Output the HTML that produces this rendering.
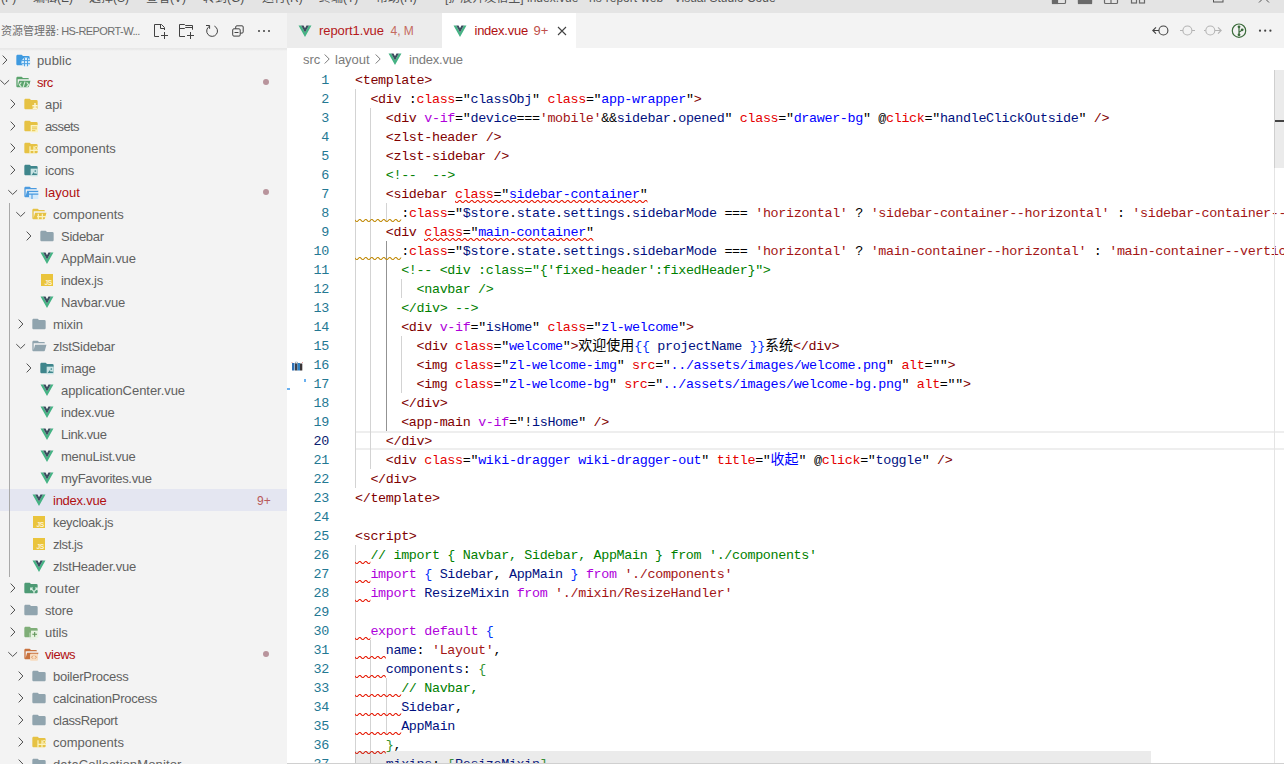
<!DOCTYPE html>
<html lang="zh-CN">
<head>
<meta charset="utf-8">
<title>index.vue - hs-report-web - Visual Studio Code</title>
<style>
*{box-sizing:border-box;margin:0;padding:0}
html,body{width:1284px;height:764px;overflow:hidden;background:#fff}
body{position:relative;font-family:"Liberation Sans","Noto Sans CJK SC",sans-serif;font-size:13px;color:#616161}
.abs{position:absolute}
/* title bar */
#titlebar{position:absolute;left:0;top:-17px;width:1284px;height:30px;background:#e4e4e4;color:#4f4f4f;font-size:12px;line-height:30px;white-space:nowrap;overflow:hidden}
#titlebar .mi{position:absolute;top:0}
#titlebar .wc{position:absolute}
/* sidebar */
#sidebar{position:absolute;left:0;top:13px;width:287px;height:751px;background:#f3f3f3;overflow:hidden}
#sbtitle{position:absolute;left:1px;top:0;height:35px;line-height:36px;font-size:11px;color:#6f6f6f;white-space:nowrap}
#sbtitle b{font-weight:normal;letter-spacing:-0.560px;margin-left:-1px}
.row{position:absolute;left:0;width:287px;height:22px;line-height:24px;white-space:nowrap}
.row.sel{background:#e4e6f1}
.row span{position:absolute;top:0}
.lbl{color:#616161;font-size:13px}
.lbl.err{color:#b01011}
.twb{width:16px;height:22px}
.tw{position:absolute;top:3px;left:0}
.icb{width:16px;height:22px}
.ic{position:absolute;top:3px;left:0;display:block}
.dot{left:263px;top:8px !important;width:6px;height:6px;border-radius:50%;background:#b8949c}
.badge{left:257px;color:#b8595a;font-size:12px}
#tguide{position:absolute;left:9px;top:203px;width:1px;height:374px;background:#a9a9a9}
/* tabs */
#tabs{position:absolute;left:287px;top:13px;width:997px;height:35px;background:#f3f3f3}
.tab{position:absolute;top:0;height:35px;line-height:36px;font-size:13px;white-space:nowrap}
.tab span{position:absolute;top:0}
#bc{position:absolute;left:287px;top:48px;width:997px;height:22px;line-height:24px;color:#7b7b7b;font-size:13px;white-space:nowrap;background:#fff}
#bc span{position:absolute;top:0}
.vi{width:16px;height:16px}.vi .ic{top:0}
/* editor */
#ed{position:absolute;left:0;top:0;width:1284px;height:764px;pointer-events:none}
.ln{position:absolute;left:287px;width:42px;height:19px;line-height:21px;text-align:right;color:#237893;font-family:"Liberation Mono",monospace;font-size:13.4px;letter-spacing:-0.341px}
.ln.cur{color:#0b216f}
.cl{position:absolute;left:355px;height:19px;line-height:21px;white-space:pre;color:#000;font-family:"Liberation Mono","Noto Sans CJK SC",monospace;font-size:13.4px;letter-spacing:-0.341px}
.cj{font-family:"Noto Sans CJK SC",sans-serif;font-size:14px;letter-spacing:0;line-height:0}
.t{color:#800000}.a{color:#e50000}.s{color:#0000ff}.k{color:#af00db}.v{color:#001080}.r{color:#a31515}.c{color:#008000}
.b1{color:#0431fa}.b2{color:#319331}.b3{color:#7b3814}
.ig{position:absolute;width:1px;background:#d3d3d3}
.ig.act{background:#939393}
.sq{position:absolute;overflow:visible}
#curline{position:absolute;left:355px;top:431px;width:929px;height:19px;border-top:2px solid #eee;border-bottom:2px solid #eee}
#vsb{position:absolute;left:1274px;top:70px;width:10px;height:694px;border-left:1px solid #e4e4e4}
#vsl{position:absolute;left:1274px;top:70px;width:10px;height:98px;background:#ebebeb;border-left:1px solid #cfcfcf}
#vmark{position:absolute;left:1275px;top:120px;width:9px;height:2px;background:#444}
#hsl{position:absolute;left:355px;top:751px;width:796px;height:13px;background:rgba(100,100,100,.13)}
#botline{position:absolute;left:287px;top:763px;width:997px;height:1px;background:#d0d0d0}
</style>
</head>
<body>
<div id="titlebar">
<span class="mi" style="left:-23px">文件(F)</span>
<span class="mi" style="left:33px">编辑(E)</span>
<span class="mi" style="left:89px">选择(S)</span>
<span class="mi" style="left:146px">查看(V)</span>
<span class="mi" style="left:203px">转到(G)</span>
<span class="mi" style="left:262px">运行(R)</span>
<span class="mi" style="left:319px">终端(T)</span>
<span class="mi" style="left:376px">帮助(H)</span>
<span class="mi" style="left:445px;color:#555">[扩展开发宿主] index.vue - hs-report-web - Visual Studio Code</span>
<svg class="wc" style="left:1050px;top:7px" width="100" height="16" viewBox="0 0 100 16"><g fill="none" stroke="#6a6a6a" stroke-width="1.200">
<rect x="2.500" y="2.500" width="13" height="11" rx="1"/><rect x="2.500" y="2.500" width="5" height="11" fill="#6a6a6a"/>
<rect x="28.500" y="2.500" width="13" height="11" rx="1"/><rect x="28.500" y="8.500" width="13" height="5" fill="#6a6a6a"/>
<rect x="54.500" y="2.500" width="13" height="11" rx="1"/><path d="M61 2.500v11"/>
<rect x="81.500" y="2.500" width="5" height="4"/><rect x="89.500" y="2.500" width="5" height="4"/><rect x="81.500" y="8.500" width="5" height="4.500"/><rect x="89.500" y="8.500" width="5" height="4.500"/>
</g></svg>
<svg class="wc" style="left:1208px;top:8px" width="70" height="14" viewBox="0 0 70 14"><g fill="none" stroke="#555" stroke-width="1">
<rect x="5.500" y="1.500" width="9.500" height="9.500"/><path d="M51 1.500l10 10M61 1.500l-10 10"/></g></svg>
</div>

<div id="sidebar">
<div id="sbtitle">资源管理器: <b>HS-REPORT-W...</b></div>
<svg class="abs" style="left:150px;top:8px" width="130" height="20" viewBox="0 0 130 20"><g fill="none" stroke="#424242" stroke-width="1">
<!-- new file -->
<path d="M9 15.500H4.500V3.500h7l3 3v2.500M10.500 3.500v4h4M14.500 11v7M11 14.500h7"/>
<!-- new folder -->
<path d="M35 15.500H29.500V3.500H34.500l1 1H42.500V8.700M29.500 7.500H34.500l1-1H42.500M40.500 11v7M37 14.500h7"/>
<!-- refresh -->
<path d="M59.600 5.200A5.400 5.400 0 1 0 64.400 5.100M56 4.500H59.600V7.800"/>
<!-- collapse all -->
<rect x="82.700" y="7.800" width="7.500" height="7.300" rx="1.200"/><path d="M85.700 7.800V6a1.200 1.200 0 0 1 1.200-1.200h5.100a1.200 1.200 0 0 1 1.200 1.200v4.900a1.200 1.200 0 0 1-1.200 1.200H90.200M84.500 11.500h4"/>
</g><g fill="#424242"><circle cx="109" cy="10" r="1"/><circle cx="114" cy="10" r="1"/><circle cx="119" cy="10" r="1"/></g></svg>
<div style="position:absolute;left:0;top:35px;width:287px;height:716px;overflow:hidden">
<div style="position:relative;top:-48px">
<div class="row" style="top:49px"><span class="twb" style="left:-3.4px"><svg class="tw" width="16" height="16" viewBox="0 0 16 16"><path d="M5.700 3.600L9.900 8l-4.200 4.400" fill="none" stroke="#505050" stroke-width="1"/></svg></span><span class="icb" style="left:15px"><svg class="ic" width="16" height="16" viewBox="0 0 24 24"><path d="M10 4H4c-1.11 0-2 .89-2 2v12c0 1.097.903 2 2 2h16c1.097 0 2-.903 2-2V8a2 2 0 0 0-2-2h-8l-2-2z" fill="#3f9ae0"/><circle cx="16.500" cy="15.200" r="6.800" fill="#d9eefc"/><path d="M10.500 12.900h12M10.500 17.500h12M14.200 9v12.400M18.800 9v12.400" stroke="#4b9fe2" stroke-width="1.500" fill="none"/></svg></span><span class="lbl" style="left:37px;letter-spacing:0.089px">public</span></div>
<div class="row" style="top:71px"><span class="twb" style="left:-3.4px"><svg class="tw" width="16" height="16" viewBox="0 0 16 16"><path d="M3.300 6.200L7.700 10.400l4.400-4.200" fill="none" stroke="#505050" stroke-width="1"/></svg></span><span class="icb" style="left:15px"><svg class="ic" width="16" height="16" viewBox="0 0 24 24"><path d="M19 20H4c-1.11 0-2-.9-2-2V6c0-1.11.89-2 2-2h6l2 2h7a2 2 0 0 1 2 2H4v10l2.14-8h17.07l-2.28 8.5c-.23.87-1.01 1.5-1.93 1.5z" fill="#5aa36c"/><path d="M9.500 12.500l-3 3.500 3 3.500M17.500 12.500l3 3.500-3 3.500M15 11.500l-3 9" stroke="#d7ecd9" stroke-width="1.800" fill="none"/></svg></span><span class="lbl err" style="left:37px;letter-spacing:-0.481px">src</span><span class="dot"></span></div>
<div class="row" style="top:93px"><span class="twb" style="left:4.6px"><svg class="tw" width="16" height="16" viewBox="0 0 16 16"><path d="M5.700 3.600L9.900 8l-4.200 4.400" fill="none" stroke="#505050" stroke-width="1"/></svg></span><span class="icb" style="left:23px"><svg class="ic" width="16" height="16" viewBox="0 0 24 24"><path d="M10 4H4c-1.11 0-2 .89-2 2v12c0 1.097.903 2 2 2h16c1.097 0 2-.903 2-2V8a2 2 0 0 0-2-2h-8l-2-2z" fill="#e6c244"/><path d="M14 14.500h8M18 10.500v9M14.500 18.500h7" stroke="#fdf6d4" stroke-width="2.200" fill="none"/></svg></span><span class="lbl" style="left:45px;letter-spacing:-0.086px">api</span></div>
<div class="row" style="top:115px"><span class="twb" style="left:4.6px"><svg class="tw" width="16" height="16" viewBox="0 0 16 16"><path d="M5.700 3.600L9.900 8l-4.200 4.400" fill="none" stroke="#505050" stroke-width="1"/></svg></span><span class="icb" style="left:23px"><svg class="ic" width="16" height="16" viewBox="0 0 24 24"><path d="M10 4H4c-1.11 0-2 .89-2 2v12c0 1.097.903 2 2 2h16c1.097 0 2-.903 2-2V8a2 2 0 0 0-2-2h-8l-2-2z" fill="#e6c244"/><rect x="11.500" y="10.500" width="11" height="11" fill="#fbf3c0"/><path d="M13.500 13.500h7.500M13.500 16.200h7.500M13.500 19h5" stroke="#e6c244" stroke-width="1.400"/></svg></span><span class="lbl" style="left:45px;letter-spacing:-0.613px">assets</span></div>
<div class="row" style="top:137px"><span class="twb" style="left:4.6px"><svg class="tw" width="16" height="16" viewBox="0 0 16 16"><path d="M5.700 3.600L9.900 8l-4.200 4.400" fill="none" stroke="#505050" stroke-width="1"/></svg></span><span class="icb" style="left:23px"><svg class="ic" width="16" height="16" viewBox="0 0 24 24"><path d="M10 4H4c-1.11 0-2 .89-2 2v12c0 1.097.903 2 2 2h16c1.097 0 2-.903 2-2V8a2 2 0 0 0-2-2h-8l-2-2z" fill="#e6c244"/><path d="M10.500 9.500v12M10.500 15.500h12M16.500 9.500v12" stroke="#fbf3c0" stroke-width="1.800" fill="none"/><circle cx="19.800" cy="11.800" r="2.200" fill="none" stroke="#fbf3c0" stroke-width="1.400"/></svg></span><span class="lbl" style="left:45px;letter-spacing:-0.003px">components</span></div>
<div class="row" style="top:159px"><span class="twb" style="left:4.6px"><svg class="tw" width="16" height="16" viewBox="0 0 16 16"><path d="M5.700 3.600L9.900 8l-4.200 4.400" fill="none" stroke="#505050" stroke-width="1"/></svg></span><span class="icb" style="left:23px"><svg class="ic" width="16" height="16" viewBox="0 0 24 24"><path d="M10 4H4c-1.11 0-2 .89-2 2v12c0 1.097.903 2 2 2h16c1.097 0 2-.903 2-2V8a2 2 0 0 0-2-2h-8l-2-2z" fill="#3f868c"/><rect x="11.500" y="10" width="10.500" height="11.500" fill="#c9e4e4"/><path d="M13 19.500l3-4 2 2.500 1.500-1.500 2 3z" fill="#3f868c"/><circle cx="18.500" cy="13.500" r="1.300" fill="#3f868c"/></svg></span><span class="lbl" style="left:45px;letter-spacing:-0.252px">icons</span></div>
<div class="row" style="top:181px"><span class="twb" style="left:4.6px"><svg class="tw" width="16" height="16" viewBox="0 0 16 16"><path d="M3.300 6.200L7.700 10.400l4.400-4.200" fill="none" stroke="#505050" stroke-width="1"/></svg></span><span class="icb" style="left:23px"><svg class="ic" width="16" height="16" viewBox="0 0 24 24"><path d="M19 20H4c-1.11 0-2-.9-2-2V6c0-1.11.89-2 2-2h6l2 2h7a2 2 0 0 1 2 2H4v10l2.14-8h17.07l-2.28 8.5c-.23.87-1.01 1.5-1.93 1.5z" fill="#4b9be0"/><rect x="9" y="12" width="14" height="10.500" fill="#d4eafb"/><path d="M9 15.200h14M13.500 15.200v7.300" stroke="#4b9be0" stroke-width="1.600"/></svg></span><span class="lbl err" style="left:45px;letter-spacing:0.016px">layout</span><span class="dot"></span></div>
<div class="row" style="top:203px"><span class="twb" style="left:12.6px"><svg class="tw" width="16" height="16" viewBox="0 0 16 16"><path d="M3.300 6.200L7.700 10.400l4.400-4.200" fill="none" stroke="#505050" stroke-width="1"/></svg></span><span class="icb" style="left:31px"><svg class="ic" width="16" height="16" viewBox="0 0 24 24"><path d="M19 20H4c-1.11 0-2-.9-2-2V6c0-1.11.89-2 2-2h6l2 2h7a2 2 0 0 1 2 2H4v10l2.14-8h17.07l-2.28 8.5c-.23.87-1.01 1.5-1.93 1.5z" fill="#e6c244"/><path d="M11 11.500v9.500M9 16h14M17 11.500v9.500" stroke="#fbf3c0" stroke-width="1.800" fill="none"/></svg></span><span class="lbl" style="left:53px;letter-spacing:-0.003px">components</span></div>
<div class="row" style="top:225px"><span class="twb" style="left:20.6px"><svg class="tw" width="16" height="16" viewBox="0 0 16 16"><path d="M5.700 3.600L9.900 8l-4.200 4.400" fill="none" stroke="#505050" stroke-width="1"/></svg></span><span class="icb" style="left:39px"><svg class="ic" width="16" height="16" viewBox="0 0 24 24"><path d="M10 4H4c-1.11 0-2 .89-2 2v12c0 1.097.903 2 2 2h16c1.097 0 2-.903 2-2V8a2 2 0 0 0-2-2h-8l-2-2z" fill="#90a4ae"/></svg></span><span class="lbl" style="left:61px;letter-spacing:-0.288px">Sidebar</span></div>
<div class="row" style="top:247px"><span class="icb" style="left:39px"><svg class="ic" width="16" height="16" viewBox="0 0 24 24"><path d="M2.300 3.700L12 20.900l9.700-17.200h-3.900L12 14.100 6.200 3.700z" fill="#45b384"/><path d="M6.200 3.700L12 14.100l5.800-10.400h-3.600L12 7.700 9.800 3.700z" fill="#3a4d5e"/></svg></span><span class="lbl" style="left:61px;letter-spacing:-0.090px">AppMain.vue</span></div>
<div class="row" style="top:269px"><span class="icb" style="left:39px"><svg class="ic" width="16" height="16" viewBox="0 0 24 24"><rect x="3" y="3" width="18" height="18" fill="#eac43c"/><text x="19.5" y="19" font-family="Liberation Sans,sans-serif" font-size="10" font-weight="bold" fill="#fdf3d6" text-anchor="end" letter-spacing="-0.4">JS</text></svg></span><span class="lbl" style="left:61px;letter-spacing:-0.272px">index.js</span></div>
<div class="row" style="top:291px"><span class="icb" style="left:39px"><svg class="ic" width="16" height="16" viewBox="0 0 24 24"><path d="M2.300 3.700L12 20.900l9.700-17.200h-3.900L12 14.100 6.200 3.700z" fill="#45b384"/><path d="M6.200 3.700L12 14.100l5.800-10.400h-3.600L12 7.700 9.800 3.700z" fill="#3a4d5e"/></svg></span><span class="lbl" style="left:61px;letter-spacing:-0.177px">Navbar.vue</span></div>
<div class="row" style="top:313px"><span class="twb" style="left:12.6px"><svg class="tw" width="16" height="16" viewBox="0 0 16 16"><path d="M5.700 3.600L9.900 8l-4.200 4.400" fill="none" stroke="#505050" stroke-width="1"/></svg></span><span class="icb" style="left:31px"><svg class="ic" width="16" height="16" viewBox="0 0 24 24"><path d="M10 4H4c-1.11 0-2 .89-2 2v12c0 1.097.903 2 2 2h16c1.097 0 2-.903 2-2V8a2 2 0 0 0-2-2h-8l-2-2z" fill="#90a4ae"/></svg></span><span class="lbl" style="left:53px;letter-spacing:-0.089px">mixin</span></div>
<div class="row" style="top:335px"><span class="twb" style="left:12.6px"><svg class="tw" width="16" height="16" viewBox="0 0 16 16"><path d="M3.300 6.200L7.700 10.400l4.400-4.200" fill="none" stroke="#505050" stroke-width="1"/></svg></span><span class="icb" style="left:31px"><svg class="ic" width="16" height="16" viewBox="0 0 24 24"><path d="M19 20H4c-1.11 0-2-.9-2-2V6c0-1.11.89-2 2-2h6l2 2h7a2 2 0 0 1 2 2H4v10l2.14-8h17.07l-2.28 8.5c-.23.87-1.01 1.5-1.93 1.5z" fill="#90a4ae"/></svg></span><span class="lbl" style="left:53px;letter-spacing:-0.219px">zlstSidebar</span></div>
<div class="row" style="top:357px"><span class="twb" style="left:20.6px"><svg class="tw" width="16" height="16" viewBox="0 0 16 16"><path d="M5.700 3.600L9.900 8l-4.200 4.400" fill="none" stroke="#505050" stroke-width="1"/></svg></span><span class="icb" style="left:39px"><svg class="ic" width="16" height="16" viewBox="0 0 24 24"><path d="M10 4H4c-1.11 0-2 .89-2 2v12c0 1.097.903 2 2 2h16c1.097 0 2-.903 2-2V8a2 2 0 0 0-2-2h-8l-2-2z" fill="#3f868c"/><rect x="11.500" y="10" width="10.500" height="11.500" fill="#c9e4e4"/><path d="M13 19.500l3-4 2 2.500 1.500-1.500 2 3z" fill="#3f868c"/><circle cx="18.500" cy="13.500" r="1.300" fill="#3f868c"/></svg></span><span class="lbl" style="left:61px;letter-spacing:-0.164px">image</span></div>
<div class="row" style="top:379px"><span class="icb" style="left:39px"><svg class="ic" width="16" height="16" viewBox="0 0 24 24"><path d="M2.300 3.700L12 20.900l9.700-17.200h-3.900L12 14.100 6.200 3.700z" fill="#45b384"/><path d="M6.200 3.700L12 14.100l5.800-10.400h-3.600L12 7.700 9.800 3.700z" fill="#3a4d5e"/></svg></span><span class="lbl" style="left:61px;letter-spacing:-0.049px">applicationCenter.vue</span></div>
<div class="row" style="top:401px"><span class="icb" style="left:39px"><svg class="ic" width="16" height="16" viewBox="0 0 24 24"><path d="M2.300 3.700L12 20.900l9.700-17.200h-3.900L12 14.100 6.200 3.700z" fill="#45b384"/><path d="M6.200 3.700L12 14.100l5.800-10.400h-3.600L12 7.700 9.800 3.700z" fill="#3a4d5e"/></svg></span><span class="lbl" style="left:61px;letter-spacing:-0.228px">index.vue</span></div>
<div class="row" style="top:423px"><span class="icb" style="left:39px"><svg class="ic" width="16" height="16" viewBox="0 0 24 24"><path d="M2.300 3.700L12 20.900l9.700-17.200h-3.900L12 14.100 6.200 3.700z" fill="#45b384"/><path d="M6.200 3.700L12 14.100l5.800-10.400h-3.600L12 7.700 9.800 3.700z" fill="#3a4d5e"/></svg></span><span class="lbl" style="left:61px;letter-spacing:-0.353px">Link.vue</span></div>
<div class="row" style="top:445px"><span class="icb" style="left:39px"><svg class="ic" width="16" height="16" viewBox="0 0 24 24"><path d="M2.300 3.700L12 20.900l9.700-17.200h-3.900L12 14.100 6.200 3.700z" fill="#45b384"/><path d="M6.200 3.700L12 14.100l5.800-10.400h-3.600L12 7.700 9.800 3.700z" fill="#3a4d5e"/></svg></span><span class="lbl" style="left:61px;letter-spacing:-0.236px">menuList.vue</span></div>
<div class="row" style="top:467px"><span class="icb" style="left:39px"><svg class="ic" width="16" height="16" viewBox="0 0 24 24"><path d="M2.300 3.700L12 20.900l9.700-17.200h-3.900L12 14.100 6.200 3.700z" fill="#45b384"/><path d="M6.200 3.700L12 14.100l5.800-10.400h-3.600L12 7.700 9.800 3.700z" fill="#3a4d5e"/></svg></span><span class="lbl" style="left:61px;letter-spacing:-0.312px">myFavorites.vue</span></div>
<div class="row sel" style="top:489px"><span class="icb" style="left:31px"><svg class="ic" width="16" height="16" viewBox="0 0 24 24"><path d="M2.300 3.700L12 20.900l9.700-17.200h-3.900L12 14.100 6.200 3.700z" fill="#45b384"/><path d="M6.200 3.700L12 14.100l5.800-10.400h-3.600L12 7.700 9.800 3.700z" fill="#3a4d5e"/></svg></span><span class="lbl err" style="left:53px;letter-spacing:-0.251px">index.vue</span><span class="badge">9+</span></div>
<div class="row" style="top:511px"><span class="icb" style="left:31px"><svg class="ic" width="16" height="16" viewBox="0 0 24 24"><rect x="3" y="3" width="18" height="18" fill="#eac43c"/><text x="19.5" y="19" font-family="Liberation Sans,sans-serif" font-size="10" font-weight="bold" fill="#fdf3d6" text-anchor="end" letter-spacing="-0.4">JS</text></svg></span><span class="lbl" style="left:53px;letter-spacing:-0.307px">keycloak.js</span></div>
<div class="row" style="top:533px"><span class="icb" style="left:31px"><svg class="ic" width="16" height="16" viewBox="0 0 24 24"><rect x="3" y="3" width="18" height="18" fill="#eac43c"/><text x="19.5" y="19" font-family="Liberation Sans,sans-serif" font-size="10" font-weight="bold" fill="#fdf3d6" text-anchor="end" letter-spacing="-0.4">JS</text></svg></span><span class="lbl" style="left:53px;letter-spacing:-0.400px">zlst.js</span></div>
<div class="row" style="top:555px"><span class="icb" style="left:31px"><svg class="ic" width="16" height="16" viewBox="0 0 24 24"><path d="M2.300 3.700L12 20.900l9.700-17.200h-3.900L12 14.100 6.200 3.700z" fill="#45b384"/><path d="M6.200 3.700L12 14.100l5.800-10.400h-3.600L12 7.700 9.800 3.700z" fill="#3a4d5e"/></svg></span><span class="lbl" style="left:53px;letter-spacing:-0.214px">zlstHeader.vue</span></div>
<div class="row" style="top:577px"><span class="twb" style="left:4.6px"><svg class="tw" width="16" height="16" viewBox="0 0 16 16"><path d="M5.700 3.600L9.900 8l-4.200 4.400" fill="none" stroke="#505050" stroke-width="1"/></svg></span><span class="icb" style="left:23px"><svg class="ic" width="16" height="16" viewBox="0 0 24 24"><path d="M10 4H4c-1.11 0-2 .89-2 2v12c0 1.097.903 2 2 2h16c1.097 0 2-.903 2-2V8a2 2 0 0 0-2-2h-8l-2-2z" fill="#4d9a74"/><path d="M16.500 21.500v-4l-4.500-5M16.500 17.500l4.500-5M11.500 15.500v-3.500h3.500M21.500 15.500v-3.500h-3.500" stroke="#d9efe2" stroke-width="1.700" fill="none"/></svg></span><span class="lbl" style="left:45px;letter-spacing:0.122px">router</span></div>
<div class="row" style="top:599px"><span class="twb" style="left:4.6px"><svg class="tw" width="16" height="16" viewBox="0 0 16 16"><path d="M5.700 3.600L9.900 8l-4.200 4.400" fill="none" stroke="#505050" stroke-width="1"/></svg></span><span class="icb" style="left:23px"><svg class="ic" width="16" height="16" viewBox="0 0 24 24"><path d="M10 4H4c-1.11 0-2 .89-2 2v12c0 1.097.903 2 2 2h16c1.097 0 2-.903 2-2V8a2 2 0 0 0-2-2h-8l-2-2z" fill="#90a4ae"/></svg></span><span class="lbl" style="left:45px;letter-spacing:-0.161px">store</span></div>
<div class="row" style="top:621px"><span class="twb" style="left:4.6px"><svg class="tw" width="16" height="16" viewBox="0 0 16 16"><path d="M5.700 3.600L9.900 8l-4.200 4.400" fill="none" stroke="#505050" stroke-width="1"/></svg></span><span class="icb" style="left:23px"><svg class="ic" width="16" height="16" viewBox="0 0 24 24"><path d="M10 4H4c-1.11 0-2 .89-2 2v12c0 1.097.903 2 2 2h16c1.097 0 2-.903 2-2V8a2 2 0 0 0-2-2h-8l-2-2z" fill="#7fae78"/><path d="M10.500 13v9.500h9.500" stroke="#dcecd6" stroke-width="1.200" fill="none"/><rect x="12" y="10" width="11" height="11" fill="#e6f2e0"/><path d="M14 15.500h7M17.500 12v7" stroke="#5f9458" stroke-width="1.600"/></svg></span><span class="lbl" style="left:45px;letter-spacing:-0.085px">utils</span></div>
<div class="row" style="top:643px"><span class="twb" style="left:4.6px"><svg class="tw" width="16" height="16" viewBox="0 0 16 16"><path d="M3.300 6.200L7.700 10.400l4.400-4.200" fill="none" stroke="#505050" stroke-width="1"/></svg></span><span class="icb" style="left:23px"><svg class="ic" width="16" height="16" viewBox="0 0 24 24"><path d="M19 20H4c-1.11 0-2-.9-2-2V6c0-1.11.89-2 2-2h6l2 2h7a2 2 0 0 1 2 2H4v10l2.14-8h17.07l-2.28 8.5c-.23.87-1.01 1.5-1.93 1.5z" fill="#c9733f"/><rect x="10.500" y="11.500" width="12" height="10.500" rx="1.500" fill="#f7dcc0"/><path d="M15 14.500l-2.200 2.300 2.200 2.300M18 14.500l2.200 2.300-2.200 2.300" stroke="#d98a4f" stroke-width="1.300" fill="none"/></svg></span><span class="lbl err" style="left:45px;letter-spacing:-0.483px">views</span><span class="dot"></span></div>
<div class="row" style="top:665px"><span class="twb" style="left:12.6px"><svg class="tw" width="16" height="16" viewBox="0 0 16 16"><path d="M5.700 3.600L9.900 8l-4.200 4.400" fill="none" stroke="#505050" stroke-width="1"/></svg></span><span class="icb" style="left:31px"><svg class="ic" width="16" height="16" viewBox="0 0 24 24"><path d="M10 4H4c-1.11 0-2 .89-2 2v12c0 1.097.903 2 2 2h16c1.097 0 2-.903 2-2V8a2 2 0 0 0-2-2h-8l-2-2z" fill="#90a4ae"/></svg></span><span class="lbl" style="left:53px;letter-spacing:-0.259px">boilerProcess</span></div>
<div class="row" style="top:687px"><span class="twb" style="left:12.6px"><svg class="tw" width="16" height="16" viewBox="0 0 16 16"><path d="M5.700 3.600L9.900 8l-4.200 4.400" fill="none" stroke="#505050" stroke-width="1"/></svg></span><span class="icb" style="left:31px"><svg class="ic" width="16" height="16" viewBox="0 0 24 24"><path d="M10 4H4c-1.11 0-2 .89-2 2v12c0 1.097.903 2 2 2h16c1.097 0 2-.903 2-2V8a2 2 0 0 0-2-2h-8l-2-2z" fill="#90a4ae"/></svg></span><span class="lbl" style="left:53px;letter-spacing:-0.238px">calcinationProcess</span></div>
<div class="row" style="top:709px"><span class="twb" style="left:12.6px"><svg class="tw" width="16" height="16" viewBox="0 0 16 16"><path d="M5.700 3.600L9.900 8l-4.200 4.400" fill="none" stroke="#505050" stroke-width="1"/></svg></span><span class="icb" style="left:31px"><svg class="ic" width="16" height="16" viewBox="0 0 24 24"><path d="M10 4H4c-1.11 0-2 .89-2 2v12c0 1.097.903 2 2 2h16c1.097 0 2-.903 2-2V8a2 2 0 0 0-2-2h-8l-2-2z" fill="#90a4ae"/></svg></span><span class="lbl" style="left:53px;letter-spacing:-0.376px">classReport</span></div>
<div class="row" style="top:731px"><span class="twb" style="left:12.6px"><svg class="tw" width="16" height="16" viewBox="0 0 16 16"><path d="M5.700 3.600L9.900 8l-4.200 4.400" fill="none" stroke="#505050" stroke-width="1"/></svg></span><span class="icb" style="left:31px"><svg class="ic" width="16" height="16" viewBox="0 0 24 24"><path d="M10 4H4c-1.11 0-2 .89-2 2v12c0 1.097.903 2 2 2h16c1.097 0 2-.903 2-2V8a2 2 0 0 0-2-2h-8l-2-2z" fill="#e6c244"/><path d="M10.500 9.500v12M10.500 15.500h12M16.500 9.500v12" stroke="#fbf3c0" stroke-width="1.800" fill="none"/><circle cx="19.800" cy="11.800" r="2.200" fill="none" stroke="#fbf3c0" stroke-width="1.400"/></svg></span><span class="lbl" style="left:53px;letter-spacing:0.007px">components</span></div>
<div class="row" style="top:753px"><span class="twb" style="left:12.6px"><svg class="tw" width="16" height="16" viewBox="0 0 16 16"><path d="M5.700 3.600L9.900 8l-4.200 4.400" fill="none" stroke="#505050" stroke-width="1"/></svg></span><span class="icb" style="left:31px"><svg class="ic" width="16" height="16" viewBox="0 0 24 24"><path d="M10 4H4c-1.11 0-2 .89-2 2v12c0 1.097.903 2 2 2h16c1.097 0 2-.903 2-2V8a2 2 0 0 0-2-2h-8l-2-2z" fill="#90a4ae"/></svg></span><span class="lbl" style="left:53px;letter-spacing:0.132px">dataCollectionMonitor</span></div>
<div id="tguide"></div>
<div style="position:absolute;left:0;top:48px;width:287px;height:3px;background:linear-gradient(rgba(0,0,0,.05),rgba(0,0,0,.035) 50%,rgba(0,0,0,0))"></div>
</div></div>
</div>

<div id="tabs">
<div class="tab" style="left:0;width:154.500px;background:#ececec">
<span class="vi" style="left:10px;top:10px"><svg class="ic" width="16" height="16" viewBox="0 0 24 24"><path d="M2.300 3.700L12 20.900l9.700-17.200h-3.900L12 14.100 6.200 3.700z" fill="#45b384"/><path d="M6.200 3.700L12 14.100l5.800-10.400h-3.600L12 7.700 9.800 3.700z" fill="#3a4d5e"/></svg></span>
<span style="left:32px;color:#b41a1b;letter-spacing:-0.080px">report1.vue</span>
<span style="left:103.500px;color:#c46a60;font-size:12px">4, M</span>
</div>
<div class="tab" style="left:154.500px;width:134.500px;background:#fff">
<span class="vi" style="left:10.500px;top:10px"><svg class="ic" width="16" height="16" viewBox="0 0 24 24"><path d="M2.300 3.700L12 20.900l9.700-17.200h-3.900L12 14.100 6.200 3.700z" fill="#45b384"/><path d="M6.200 3.700L12 14.100l5.800-10.400h-3.600L12 7.700 9.800 3.700z" fill="#3a4d5e"/></svg></span>
<span style="left:33px;color:#b01011;letter-spacing:-0.250px">index.vue</span>
<span style="left:92px;color:#c0504a">9+</span>
<svg style="position:absolute;left:112.500px;top:9.500px" width="16" height="16" viewBox="0 0 16 16"><path d="M4 4l8 8M12 4l-8 8" stroke="#424242" stroke-width="1.100" fill="none"/></svg>
</div>
<svg class="abs" style="left:857px;top:7px" width="135" height="22" viewBox="0 0 135 22">
<g fill="none" stroke="#424242" stroke-width="1.100"><circle cx="19.400" cy="10.500" r="4.500"/><path d="M15 10.500H9M12 7.300l-3.200 3.200 3.200 3.200"/></g>
<g fill="none" stroke="#b4b4b4" stroke-width="1.100"><circle cx="43.400" cy="10.500" r="4.500"/><path d="M36 10.500h3M48 10.500h3"/>
<circle cx="66.300" cy="10.500" r="4.500"/><path d="M71 10.500h6M74 7.300l3.200 3.200-3.200 3.200M60 10.500h1.500"/></g>
<g fill="none" stroke="#3b6b3b" stroke-width="1.200"><circle cx="95" cy="10.700" r="6.700"/><path d="M95 7v8M95 13c0-2 3-1.500 3-3.500"/></g>
<g fill="#3b6b3b"><circle cx="95" cy="6.800" r="1.400"/><circle cx="95" cy="14.800" r="1.400"/><circle cx="98.200" cy="9.800" r="1.400"/></g>
<g fill="#424242"><circle cx="116" cy="10.700" r="1.100"/><circle cx="121.200" cy="10.700" r="1.100"/><circle cx="126.400" cy="10.700" r="1.100"/></g>
</svg>
</div>

<div id="bc">
<span style="left:16px">src</span>
<svg class="abs" style="left:32px;top:3px" width="16" height="16" viewBox="0 0 16 16"><path d="M5.700 3.500L10.200 8l-4.500 4.500" fill="none" stroke="#7b7b7b" stroke-width="1"/></svg>
<span style="left:48px">layout</span>
<svg class="abs" style="left:83px;top:3px" width="16" height="16" viewBox="0 0 16 16"><path d="M5.700 3.500L10.200 8l-4.500 4.500" fill="none" stroke="#7b7b7b" stroke-width="1"/></svg>
<span class="vi" style="left:99.500px;top:3px"><svg class="ic" width="16" height="16" viewBox="0 0 24 24"><path d="M2.300 3.700L12 20.900l9.700-17.200h-3.900L12 14.100 6.200 3.700z" fill="#45b384"/><path d="M6.200 3.700L12 14.100l5.800-10.400h-3.600L12 7.700 9.800 3.700z" fill="#3a4d5e"/></svg></span>
<span style="left:122px;letter-spacing:-0.200px">index.vue</span>
</div>

<div id="ed">
<div id="curline"></div>
<div class="ig" style="left:355.0px;top:89px;height:399px"></div>
<div class="ig" style="left:370.0px;top:108px;height:361px"></div>
<div class="ig" style="left:386.0px;top:203px;height:19px"></div>
<div class="ig act" style="left:386.0px;top:241px;height:190px"></div>
<div class="ig" style="left:401.0px;top:279px;height:19px"></div>
<div class="ig" style="left:401.0px;top:336px;height:57px"></div>
<div class="ig" style="left:355.0px;top:545px;height:228px"></div>
<div class="ig" style="left:370.0px;top:640px;height:133px"></div>
<div class="ig" style="left:386.0px;top:678px;height:57px"></div>
<div class="ln" style="top:70px">1</div>
<div class="cl" style="top:70px"><span class="t">&lt;template&gt;</span></div>
<div class="ln" style="top:89px">2</div>
<div class="cl" style="top:89px">  <span class="t">&lt;div</span> :<span class="a">class</span>=&quot;<span class="v">classObj</span>&quot; <span class="a">class</span>=&quot;<span class="s">app-wrapper</span>&quot;<span class="t">&gt;</span></div>
<div class="ln" style="top:108px">3</div>
<div class="cl" style="top:108px">    <span class="t">&lt;div</span> <span class="k">v-if</span>=&quot;<span class="v">device</span>===<span class="r">&#x27;mobile&#x27;</span>&amp;&amp;<span class="v">sidebar</span>.<span class="v">opened</span>&quot; <span class="a">class</span>=&quot;<span class="s">drawer-bg</span>&quot; @<span class="a">click</span>=&quot;<span class="v">handleClickOutside</span>&quot; <span class="t">/&gt;</span></div>
<div class="ln" style="top:127px">4</div>
<div class="cl" style="top:127px">    <span class="t">&lt;zlst-header /&gt;</span></div>
<div class="ln" style="top:146px">5</div>
<div class="cl" style="top:146px">    <span class="t">&lt;zlst-sidebar /&gt;</span></div>
<div class="ln" style="top:165px">6</div>
<div class="cl" style="top:165px">    <span class="c">&lt;!--  --&gt;</span></div>
<div class="ln" style="top:184px">7</div>
<div class="cl" style="top:184px">    <span class="t">&lt;sidebar</span> <span class="a">class</span>=&quot;<span class="s">sidebar-container</span>&quot;</div>
<div class="ln" style="top:203px">8</div>
<div class="cl" style="top:203px">      :<span class="a">class</span>=&quot;<span class="v">$store</span>.<span class="v">state</span>.<span class="v">settings</span>.<span class="v">sidebarMode</span> === <span class="r">&#x27;horizontal&#x27;</span> ? <span class="r">&#x27;sidebar-container--horizontal&#x27;</span> : <span class="r">&#x27;sidebar-container--vertical&#x27;</span>&quot;</div>
<div class="ln" style="top:222px">9</div>
<div class="cl" style="top:222px">    <span class="t">&lt;div</span> <span class="a">class</span>=&quot;<span class="s">main-container</span>&quot;</div>
<div class="ln" style="top:241px">10</div>
<div class="cl" style="top:241px">      :<span class="a">class</span>=&quot;<span class="v">$store</span>.<span class="v">state</span>.<span class="v">settings</span>.<span class="v">sidebarMode</span> === <span class="r">&#x27;horizontal&#x27;</span> ? <span class="r">&#x27;main-container--horizontal&#x27;</span> : <span class="r">&#x27;main-container--vertical&#x27;</span>&quot;</div>
<div class="ln" style="top:260px">11</div>
<div class="cl" style="top:260px">      <span class="c">&lt;!-- &lt;div :class=&quot;{&#x27;fixed-header&#x27;:fixedHeader}&quot;&gt;</span></div>
<div class="ln" style="top:279px">12</div>
<div class="cl" style="top:279px">        <span class="c">&lt;navbar /&gt;</span></div>
<div class="ln" style="top:298px">13</div>
<div class="cl" style="top:298px">      <span class="c">&lt;/div&gt; --&gt;</span></div>
<div class="ln" style="top:317px">14</div>
<div class="cl" style="top:317px">      <span class="t">&lt;div</span> <span class="k">v-if</span>=&quot;<span class="v">isHome</span>&quot; <span class="a">class</span>=&quot;<span class="s">zl-welcome</span>&quot;<span class="t">&gt;</span></div>
<div class="ln" style="top:336px">15</div>
<div class="cl" style="top:336px">        <span class="t">&lt;div</span> <span class="a">class</span>=&quot;<span class="s">welcome</span>&quot;<span class="t">&gt;</span><span class="cj">欢迎使用</span><span class="b1">{{</span> <span class="v">projectName</span> <span class="b1">}}</span><span class="cj">系统</span><span class="t">&lt;/div&gt;</span></div>
<div class="ln" style="top:355px">16</div>
<div class="cl" style="top:355px">        <span class="t">&lt;img</span> <span class="a">class</span>=&quot;<span class="s">zl-welcome-img</span>&quot; <span class="a">src</span>=&quot;<span class="s">../assets/images/welcome.png</span>&quot; <span class="a">alt</span>=&quot;&quot;<span class="t">&gt;</span></div>
<div class="ln" style="top:374px">17</div>
<div class="cl" style="top:374px">        <span class="t">&lt;img</span> <span class="a">class</span>=&quot;<span class="s">zl-welcome-bg</span>&quot; <span class="a">src</span>=&quot;<span class="s">../assets/images/welcome-bg.png</span>&quot; <span class="a">alt</span>=&quot;&quot;<span class="t">&gt;</span></div>
<div class="ln" style="top:393px">18</div>
<div class="cl" style="top:393px">      <span class="t">&lt;/div&gt;</span></div>
<div class="ln" style="top:412px">19</div>
<div class="cl" style="top:412px">      <span class="t">&lt;app-main</span> <span class="k">v-if</span>=&quot;!<span class="v">isHome</span>&quot; <span class="t">/&gt;</span></div>
<div class="ln cur" style="top:431px">20</div>
<div class="cl" style="top:431px">    <span class="t">&lt;/div&gt;</span></div>
<div class="ln" style="top:450px">21</div>
<div class="cl" style="top:450px">    <span class="t">&lt;div</span> <span class="a">class</span>=&quot;<span class="s">wiki-dragger wiki-dragger-out</span>&quot; <span class="a">title</span>=&quot;<span class="cj s">收起</span>&quot; @<span class="a">click</span>=&quot;<span class="v">toggle</span>&quot; <span class="t">/&gt;</span></div>
<div class="ln" style="top:469px">22</div>
<div class="cl" style="top:469px">  <span class="t">&lt;/div&gt;</span></div>
<div class="ln" style="top:488px">23</div>
<div class="cl" style="top:488px"><span class="t">&lt;/template&gt;</span></div>
<div class="ln" style="top:507px">24</div>
<div class="ln" style="top:526px">25</div>
<div class="cl" style="top:526px"><span class="t">&lt;script&gt;</span></div>
<div class="ln" style="top:545px">26</div>
<div class="cl" style="top:545px">  <span class="c">// import { Navbar, Sidebar, AppMain } from &#x27;./components&#x27;</span></div>
<div class="ln" style="top:564px">27</div>
<div class="cl" style="top:564px">  <span class="k">import</span> <span class="b1">{</span> <span class="v">Sidebar</span>, <span class="v">AppMain</span> <span class="b1">}</span> <span class="k">from</span> <span class="r">&#x27;./components&#x27;</span></div>
<div class="ln" style="top:583px">28</div>
<div class="cl" style="top:583px">  <span class="k">import</span> <span class="v">ResizeMixin</span> <span class="k">from</span> <span class="r">&#x27;./mixin/ResizeHandler&#x27;</span></div>
<div class="ln" style="top:602px">29</div>
<div class="ln" style="top:621px">30</div>
<div class="cl" style="top:621px">  <span class="k">export</span> <span class="k">default</span> <span class="b1">{</span></div>
<div class="ln" style="top:640px">31</div>
<div class="cl" style="top:640px">    <span class="v">name</span>: <span class="r">&#x27;Layout&#x27;</span>,</div>
<div class="ln" style="top:659px">32</div>
<div class="cl" style="top:659px">    <span class="v">components</span>: <span class="b2">{</span></div>
<div class="ln" style="top:678px">33</div>
<div class="cl" style="top:678px">      <span class="c">// Navbar,</span></div>
<div class="ln" style="top:697px">34</div>
<div class="cl" style="top:697px">      <span class="v">Sidebar</span>,</div>
<div class="ln" style="top:716px">35</div>
<div class="cl" style="top:716px">      <span class="v">AppMain</span></div>
<div class="ln" style="top:735px">36</div>
<div class="cl" style="top:735px">    <span class="b2">}</span>,</div>
<div class="ln" style="top:754px">37</div>
<div class="cl" style="top:754px">    <span class="v">mixins</span>: <span class="b2">[</span><span class="v">ResizeMixin</span><span class="b2">]</span>,</div>
<svg class="sq" style="left:455.1px;top:200px" width="192.5" height="3" viewBox="0 0 192.5 3"><defs><pattern id="sqe514007_455" width="6" height="3" patternUnits="userSpaceOnUse"><g fill="#e51400"><polygon points="5.5,0 2.5,3 1.1,3 4.1,0"/><polygon points="4,0 6,2 6,0.6 5.4,0"/><polygon points="0,2 1,3 2.4,3 0,0.6"/></g></pattern></defs><rect width="192.5" height="3" fill="url(#sqe514007_455)"/></svg>
<svg class="sq" style="left:355.0px;top:219px" width="46.2" height="3" viewBox="0 0 46.2 3"><defs><pattern id="sqbf88038_355" width="6" height="3" patternUnits="userSpaceOnUse"><g fill="#bf8803"><polygon points="5.5,0 2.5,3 1.1,3 4.1,0"/><polygon points="4,0 6,2 6,0.6 5.4,0"/><polygon points="0,2 1,3 2.4,3 0,0.6"/></g></pattern></defs><rect width="46.2" height="3" fill="url(#sqbf88038_355)"/></svg>
<svg class="sq" style="left:424.3px;top:238px" width="169.4" height="3" viewBox="0 0 169.4 3"><defs><pattern id="sqe514009_424" width="6" height="3" patternUnits="userSpaceOnUse"><g fill="#e51400"><polygon points="5.5,0 2.5,3 1.1,3 4.1,0"/><polygon points="4,0 6,2 6,0.6 5.4,0"/><polygon points="0,2 1,3 2.4,3 0,0.6"/></g></pattern></defs><rect width="169.4" height="3" fill="url(#sqe514009_424)"/></svg>
<svg class="sq" style="left:355.0px;top:257px" width="46.2" height="3" viewBox="0 0 46.2 3"><defs><pattern id="sqbf880310_355" width="6" height="3" patternUnits="userSpaceOnUse"><g fill="#bf8803"><polygon points="5.5,0 2.5,3 1.1,3 4.1,0"/><polygon points="4,0 6,2 6,0.6 5.4,0"/><polygon points="0,2 1,3 2.4,3 0,0.6"/></g></pattern></defs><rect width="46.2" height="3" fill="url(#sqbf880310_355)"/></svg>
<svg class="sq" style="left:355.0px;top:561px" width="15.4" height="3" viewBox="0 0 15.4 3"><defs><pattern id="sqe5140026_355" width="6" height="3" patternUnits="userSpaceOnUse"><g fill="#e51400"><polygon points="5.5,0 2.5,3 1.1,3 4.1,0"/><polygon points="4,0 6,2 6,0.6 5.4,0"/><polygon points="0,2 1,3 2.4,3 0,0.6"/></g></pattern></defs><rect width="15.4" height="3" fill="url(#sqe5140026_355)"/></svg>
<svg class="sq" style="left:355.0px;top:580px" width="15.4" height="3" viewBox="0 0 15.4 3"><defs><pattern id="sqe5140027_355" width="6" height="3" patternUnits="userSpaceOnUse"><g fill="#e51400"><polygon points="5.5,0 2.5,3 1.1,3 4.1,0"/><polygon points="4,0 6,2 6,0.6 5.4,0"/><polygon points="0,2 1,3 2.4,3 0,0.6"/></g></pattern></defs><rect width="15.4" height="3" fill="url(#sqe5140027_355)"/></svg>
<svg class="sq" style="left:355.0px;top:599px" width="15.4" height="3" viewBox="0 0 15.4 3"><defs><pattern id="sqe5140028_355" width="6" height="3" patternUnits="userSpaceOnUse"><g fill="#e51400"><polygon points="5.5,0 2.5,3 1.1,3 4.1,0"/><polygon points="4,0 6,2 6,0.6 5.4,0"/><polygon points="0,2 1,3 2.4,3 0,0.6"/></g></pattern></defs><rect width="15.4" height="3" fill="url(#sqe5140028_355)"/></svg>
<svg class="sq" style="left:355.0px;top:637px" width="15.4" height="3" viewBox="0 0 15.4 3"><defs><pattern id="sqe5140030_355" width="6" height="3" patternUnits="userSpaceOnUse"><g fill="#e51400"><polygon points="5.5,0 2.5,3 1.1,3 4.1,0"/><polygon points="4,0 6,2 6,0.6 5.4,0"/><polygon points="0,2 1,3 2.4,3 0,0.6"/></g></pattern></defs><rect width="15.4" height="3" fill="url(#sqe5140030_355)"/></svg>
<svg class="sq" style="left:355.0px;top:656px" width="30.8" height="3" viewBox="0 0 30.8 3"><defs><pattern id="sqe5140031_355" width="6" height="3" patternUnits="userSpaceOnUse"><g fill="#e51400"><polygon points="5.5,0 2.5,3 1.1,3 4.1,0"/><polygon points="4,0 6,2 6,0.6 5.4,0"/><polygon points="0,2 1,3 2.4,3 0,0.6"/></g></pattern></defs><rect width="30.8" height="3" fill="url(#sqe5140031_355)"/></svg>
<svg class="sq" style="left:355.0px;top:675px" width="30.8" height="3" viewBox="0 0 30.8 3"><defs><pattern id="sqe5140032_355" width="6" height="3" patternUnits="userSpaceOnUse"><g fill="#e51400"><polygon points="5.5,0 2.5,3 1.1,3 4.1,0"/><polygon points="4,0 6,2 6,0.6 5.4,0"/><polygon points="0,2 1,3 2.4,3 0,0.6"/></g></pattern></defs><rect width="30.8" height="3" fill="url(#sqe5140032_355)"/></svg>
<svg class="sq" style="left:355.0px;top:694px" width="46.2" height="3" viewBox="0 0 46.2 3"><defs><pattern id="sqe5140033_355" width="6" height="3" patternUnits="userSpaceOnUse"><g fill="#e51400"><polygon points="5.5,0 2.5,3 1.1,3 4.1,0"/><polygon points="4,0 6,2 6,0.6 5.4,0"/><polygon points="0,2 1,3 2.4,3 0,0.6"/></g></pattern></defs><rect width="46.2" height="3" fill="url(#sqe5140033_355)"/></svg>
<svg class="sq" style="left:355.0px;top:713px" width="46.2" height="3" viewBox="0 0 46.2 3"><defs><pattern id="sqe5140034_355" width="6" height="3" patternUnits="userSpaceOnUse"><g fill="#e51400"><polygon points="5.5,0 2.5,3 1.1,3 4.1,0"/><polygon points="4,0 6,2 6,0.6 5.4,0"/><polygon points="0,2 1,3 2.4,3 0,0.6"/></g></pattern></defs><rect width="46.2" height="3" fill="url(#sqe5140034_355)"/></svg>
<svg class="sq" style="left:355.0px;top:732px" width="46.2" height="3" viewBox="0 0 46.2 3"><defs><pattern id="sqe5140035_355" width="6" height="3" patternUnits="userSpaceOnUse"><g fill="#e51400"><polygon points="5.5,0 2.5,3 1.1,3 4.1,0"/><polygon points="4,0 6,2 6,0.6 5.4,0"/><polygon points="0,2 1,3 2.4,3 0,0.6"/></g></pattern></defs><rect width="46.2" height="3" fill="url(#sqe5140035_355)"/></svg>
<svg class="sq" style="left:355.0px;top:751px" width="30.8" height="3" viewBox="0 0 30.8 3"><defs><pattern id="sqe5140036_355" width="6" height="3" patternUnits="userSpaceOnUse"><g fill="#e51400"><polygon points="5.5,0 2.5,3 1.1,3 4.1,0"/><polygon points="4,0 6,2 6,0.6 5.4,0"/><polygon points="0,2 1,3 2.4,3 0,0.6"/></g></pattern></defs><rect width="30.8" height="3" fill="url(#sqe5140036_355)"/></svg>
<!-- glyph margin thumbnails -->
<svg class="abs" style="left:290px;top:360px" width="14" height="12" viewBox="0 0 14 12"><rect x="2" y="3" width="2.500" height="7.500" fill="#2f6fb3"/><rect x="5" y="2" width="2.500" height="8.500" fill="#3a3f4a"/><rect x="7.500" y="3" width="2.500" height="7.500" fill="#2f7fc0"/><rect x="10" y="3.500" width="2.300" height="7" fill="#3a3436"/><rect x="5.300" y="1" width="2" height="2.500" fill="#dfe6ee"/><rect x="1.500" y="2" width="1" height="1" fill="#e9a0a0"/><rect x="12" y="2" width="1" height="1" fill="#e9a0a0"/></svg>
<div class="abs" style="left:304px;top:379px;width:2px;height:3px;background:#6bb1f0"></div>
<div class="abs" style="left:287px;top:388px;width:3px;height:2px;background:#6bb1f0"></div>
<div id="vsb"></div><div id="vsl"></div><div id="vmark"></div>
<div id="hsl"></div>
<div id="botline"></div>
</div>
</body>
</html>
